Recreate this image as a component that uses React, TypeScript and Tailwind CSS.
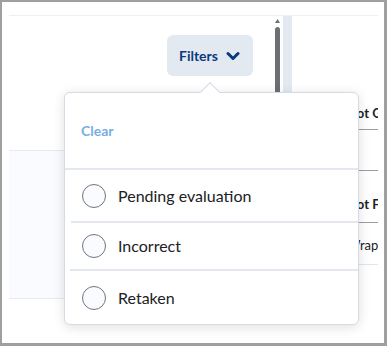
import React from "react";

function Radio({ label }: { label: string }) {
  return (
    <div className="flex items-center pl-[17px] gap-[12px]">
      <span className="w-[24px] h-[24px] rounded-full border border-[#6f7478] bg-[#f9fbff] shrink-0" />
      <span className="text-[16px] leading-[20px] text-[#202122]">{label}</span>
    </div>
  );
}

export default function App() {
  return (
    <div className="relative w-[387px] h-[346px] overflow-hidden bg-white border-l-2 border-t-2 border-r-[3px] border-b-[3px] border-[#9f9f9f] font-['Lato',sans-serif]">
      <div className="h-full pl-[7px] pr-[6px] pt-[13px]">
        <div className="flex border-t border-[#eceff4]">
          {/* left column */}
          <div className="w-[283px] shrink-0 flex flex-col">
            <div className="flex h-[134px]">
              <button className="ml-[158px] mt-[19px] w-[86px] h-[41px] rounded-[6px] bg-[#e3e9f1] flex items-center pl-[12px] gap-[8px] text-[14px] font-bold text-[#0b3a7c]">
                <span>Filters</span>
                <svg width="14" height="10" viewBox="0 0 14 10" fill="none">
                  <path d="M2 2.5 L7 7.5 L12 2.5" stroke="#0b3a7c" strokeWidth="3" strokeLinecap="round" strokeLinejoin="round" />
                </svg>
              </button>
              <div className="ml-[22px] w-[5px] flex flex-col items-center pt-[3px]">
                <svg width="5" height="4" viewBox="0 0 5 4">
                  <path d="M2.5 0 L5 4 L0 4 Z" fill="#6c7075" />
                </svg>
                <div className="mt-[4px] w-[5px] flex-1 rounded-t-full bg-[#6c7075]" />
              </div>
              <div className="ml-[3px] w-[9px] bg-[#e3e9f1]" />
            </div>
            <div className="h-[149px] bg-[#f9fbfe] border-t border-b border-[#e6ebf2]" />
          </div>
          {/* right column */}
          <div className="flex-1 min-w-0 overflow-hidden flex flex-col text-[13px] leading-[16px] text-[#202122] whitespace-nowrap">
            <div className="h-[114px] flex items-end pb-[8px] pl-[55px] border-b border-[#9c9c9c] font-bold">Not Graded</div>
            <div className="h-[41px] border-b border-[#9c9c9c]" />
            <div className="h-[52px] flex items-end pb-[10px] pl-[55px] border-b border-[#9c9c9c] font-bold">Not Found</div>
            <div className="h-[42px] flex items-center pt-[2px] pl-[55px] border-b border-[#e2e4e8]">Wrap</div>
          </div>
        </div>
      </div>

      {/* popup */}
      <div className="absolute left-[62px] top-[90px] w-[295px] bg-white border border-[#d5dbe4] rounded-[6px] shadow-[0_2px_12px_rgba(0,0,0,0.13)] flex flex-col">
        <div className="h-[75px] flex items-center pl-[16px] text-[14px] font-bold text-[#7aaee0]">Clear</div>
        <div className="h-[2px] bg-[#e3e8ef]" />
        <div className="h-[51px] flex items-center">
          <Radio label="Pending evaluation" />
        </div>
        <div className="h-[2px] ml-[6px] bg-[#e3e8ef]" />
        <div className="h-[46px] flex items-center">
          <Radio label="Incorrect" />
        </div>
        <div className="h-[2px] ml-[5px] bg-[#e3e8ef]" />
        <div className="h-[53px] flex items-center">
          <Radio label="Retaken" />
        </div>
      </div>
      {/* arrow */}
      <div className="absolute left-[201px] top-[83px] w-[14px] h-[14px] rotate-45 bg-white border-l border-t border-[#d5dbe4]" />
    </div>
  );
}
